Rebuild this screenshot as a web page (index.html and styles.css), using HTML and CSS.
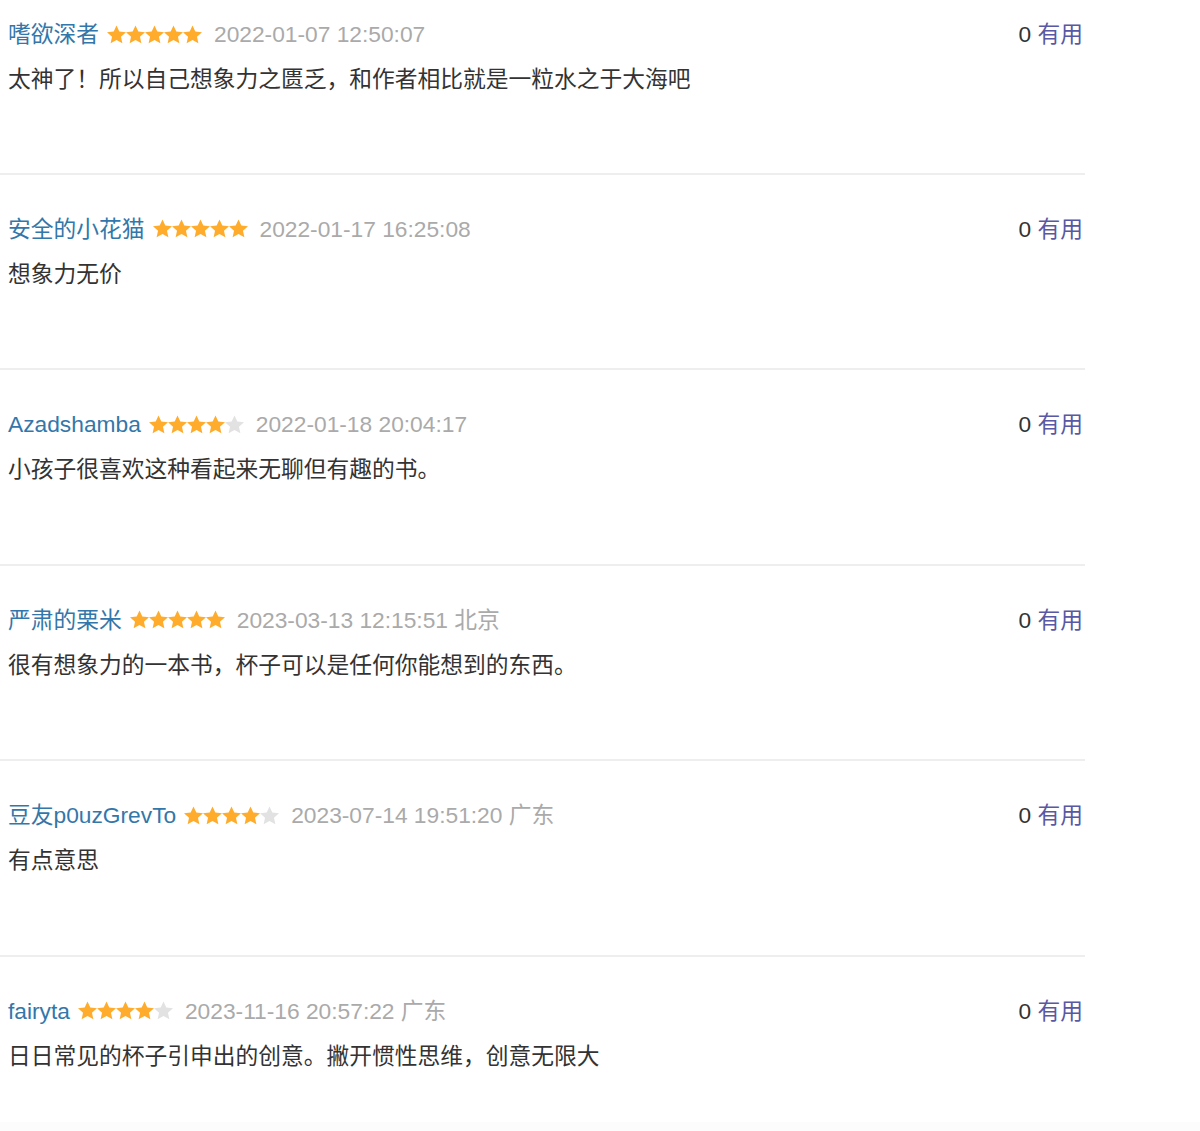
FILE: index.html
```html
<!DOCTYPE html>
<html lang="zh-CN">
<head>
<meta charset="utf-8">
<title>短评</title>
<link rel="stylesheet" href="styles.css">
</head>
<body>
<svg width="0" height="0" class="defs" aria-hidden="true">
  <defs>
    <symbol id="star" viewBox="0 0 20 19.2">
      <path d="M10 0l2.95 6.45 7.05.75-5.3 4.75 1.5 6.95L10 15.35 3.8 18.9l1.5-6.95L0 7.2l7.05-.75z"/>
    </symbol>
  </defs>
</svg>
<div class="reviews">
  <div class="review">
    <div class="head">
      <div class="meta">
        <a class="name">嗜欲深者</a>
        <span class="stars"><svg class="on"><use href="#star"/></svg><svg class="on"><use href="#star"/></svg><svg class="on"><use href="#star"/></svg><svg class="on"><use href="#star"/></svg><svg class="on"><use href="#star"/></svg></span>
        <span class="time">2022-01-07 12:50:07</span>
      </div>
      <div class="votes"><span class="count">0</span> <a class="useful">有用</a></div>
    </div>
    <p class="text">太神了！所以自己想象力之匮乏，和作者相比就是一粒水之于大海吧</p>
  </div>
  <div class="review">
    <div class="head">
      <div class="meta">
        <a class="name">安全的小花猫</a>
        <span class="stars"><svg class="on"><use href="#star"/></svg><svg class="on"><use href="#star"/></svg><svg class="on"><use href="#star"/></svg><svg class="on"><use href="#star"/></svg><svg class="on"><use href="#star"/></svg></span>
        <span class="time">2022-01-17 16:25:08</span>
      </div>
      <div class="votes"><span class="count">0</span> <a class="useful">有用</a></div>
    </div>
    <p class="text">想象力无价</p>
  </div>
  <div class="review">
    <div class="head">
      <div class="meta">
        <a class="name">Azadshamba</a>
        <span class="stars"><svg class="on"><use href="#star"/></svg><svg class="on"><use href="#star"/></svg><svg class="on"><use href="#star"/></svg><svg class="on"><use href="#star"/></svg><svg class="off"><use href="#star"/></svg></span>
        <span class="time">2022-01-18 20:04:17</span>
      </div>
      <div class="votes"><span class="count">0</span> <a class="useful">有用</a></div>
    </div>
    <p class="text">小孩子很喜欢这种看起来无聊但有趣的书。</p>
  </div>
  <div class="review">
    <div class="head">
      <div class="meta">
        <a class="name">严肃的栗米</a>
        <span class="stars"><svg class="on"><use href="#star"/></svg><svg class="on"><use href="#star"/></svg><svg class="on"><use href="#star"/></svg><svg class="on"><use href="#star"/></svg><svg class="on"><use href="#star"/></svg></span>
        <span class="time">2023-03-13 12:15:51 北京</span>
      </div>
      <div class="votes"><span class="count">0</span> <a class="useful">有用</a></div>
    </div>
    <p class="text">很有想象力的一本书，杯子可以是任何你能想到的东西。</p>
  </div>
  <div class="review">
    <div class="head">
      <div class="meta">
        <a class="name">豆友p0uzGrevTo</a>
        <span class="stars"><svg class="on"><use href="#star"/></svg><svg class="on"><use href="#star"/></svg><svg class="on"><use href="#star"/></svg><svg class="on"><use href="#star"/></svg><svg class="off"><use href="#star"/></svg></span>
        <span class="time">2023-07-14 19:51:20 广东</span>
      </div>
      <div class="votes"><span class="count">0</span> <a class="useful">有用</a></div>
    </div>
    <p class="text">有点意思</p>
  </div>
  <div class="review">
    <div class="head">
      <div class="meta">
        <a class="name">fairyta</a>
        <span class="stars"><svg class="on"><use href="#star"/></svg><svg class="on"><use href="#star"/></svg><svg class="on"><use href="#star"/></svg><svg class="on"><use href="#star"/></svg><svg class="off"><use href="#star"/></svg></span>
        <span class="time">2023-11-16 20:57:22 广东</span>
      </div>
      <div class="votes"><span class="count">0</span> <a class="useful">有用</a></div>
    </div>
    <p class="text">日日常见的杯子引申出的创意。撇开惯性思维，创意无限大</p>
  </div>
</div>
<div class="footer-band"></div>
</body>
</html>
```

FILE: styles.css
```css
html, body {
  margin: 0;
  padding: 0;
  background: #fff;
}

body {
  font-family: "Liberation Sans", Arial, "Noto Sans CJK SC", sans-serif;
  font-size: 22.75px;
  color: #333;
  width: 1200px;
  height: 1131px;
  overflow: hidden;
  position: relative;
}

.defs {
  position: absolute;
  width: 0;
  height: 0;
}

.reviews {
  width: 1085px;
}

.review {
  border-top: 2px solid #eeeeee;
  padding: 38px 2px 78.5px 8px;
}

.review:first-child {
  border-top: none;
  padding-top: 18px;
  padding-bottom: 77.5px;
}

.head {
  display: flex;
  justify-content: space-between;
  align-items: center;
  height: 32px;
}

.meta {
  display: flex;
  align-items: center;
  white-space: nowrap;
}

.name {
  color: #3377aa;
  text-decoration: none;
  line-height: 32px;
}

.stars {
  display: flex;
  margin: 0 12px 0 8px;
}

.stars svg {
  width: 19px;
  height: 19px;
  display: block;
}

.stars .on {
  fill: #ffac2d;
}

.stars .off {
  fill: #e2e2e2;
}

.time {
  color: #aaaaaa;
  line-height: 32px;
}

.votes {
  white-space: nowrap;
  line-height: 32px;
}

.count {
  color: #333;
}

.useful {
  color: #5858a4;
  text-decoration: none;
}

.text {
  margin: 13px 0 0;
  line-height: 32px;
  color: #333;
}

.footer-band {
  position: absolute;
  left: 0;
  right: 0;
  top: 1122px;
  height: 9px;
  background: #fcfcfc;
}
```
